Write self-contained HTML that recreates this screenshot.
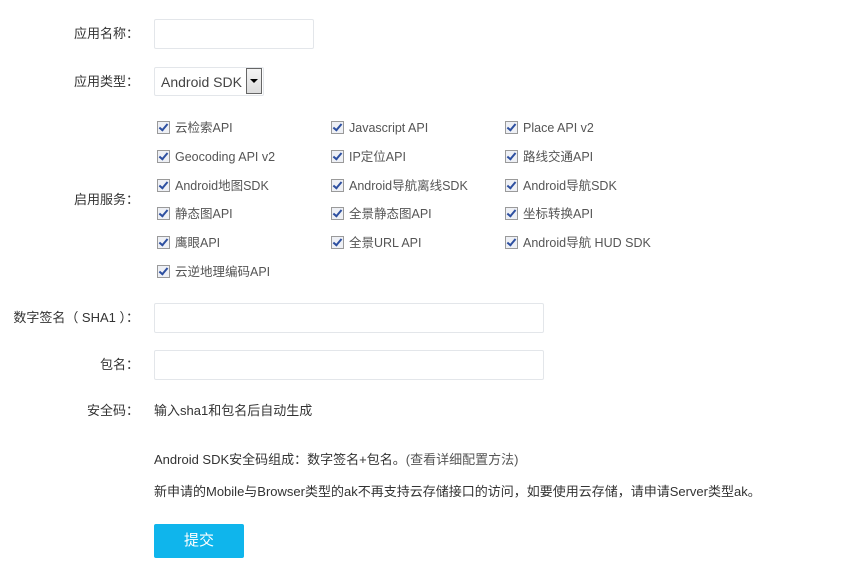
<!DOCTYPE html>
<html><head><meta charset="utf-8"><style>
body{margin:0;width:861px;height:587px;background:#fff;font-family:"Liberation Sans","Noto Sans CJK SC",sans-serif;font-size:13px;color:#333;position:relative;overflow:hidden}
.a{position:absolute;white-space:nowrap;line-height:16px}
.l{position:absolute;right:722px;text-align:right;white-space:nowrap;line-height:16px}
.in{position:absolute;border:1px solid #e3e6ea;border-radius:2px;background:#fff;box-sizing:border-box}
.cb{position:absolute;white-space:nowrap;line-height:16px;color:#555;font-size:12.5px}
.cb i{display:inline-block;width:11px;height:11px;border:1px solid #9a9a9a;background:#eef0f5;vertical-align:-2px;margin-right:5px;position:relative}
.cb i:after{content:"";position:absolute;left:3px;top:0px;width:3px;height:7px;border:solid #2d4fa0;border-width:0 2px 2px 0;transform:rotate(40deg)}
</style></head><body>
<div class="l" style="top:26px">应用名称：</div>
<div class="in" style="left:154px;top:19px;width:160px;height:30px"></div>
<div class="l" style="top:74px">应用类型：</div>
<div class="in" style="left:154px;top:67px;width:110px;height:29px"></div>
<div class="a" style="left:161px;top:74px;color:#444;font-size:14px">Android SDK</div>
<div style="position:absolute;left:246px;top:68px;width:16px;height:26px;border:1px solid #666;background:linear-gradient(#f4f4f4,#ddd);box-sizing:border-box"></div>
<div style="position:absolute;left:250px;top:79px;width:0;height:0;border-left:4px solid transparent;border-right:4px solid transparent;border-top:4px solid #000"></div>

<div class="cb" style="left:157px;top:120px"><i></i>云检索API</div>
<div class="cb" style="left:331px;top:120px"><i></i>Javascript API</div>
<div class="cb" style="left:505px;top:120px"><i></i>Place API v2</div>
<div class="cb" style="left:157px;top:149px"><i></i>Geocoding API v2</div>
<div class="cb" style="left:331px;top:149px"><i></i>IP定位API</div>
<div class="cb" style="left:505px;top:149px"><i></i>路线交通API</div>
<div class="l" style="top:192px">启用服务：</div>
<div class="cb" style="left:157px;top:178px"><i></i>Android地图SDK</div>
<div class="cb" style="left:331px;top:178px"><i></i>Android导航离线SDK</div>
<div class="cb" style="left:505px;top:178px"><i></i>Android导航SDK</div>
<div class="cb" style="left:157px;top:206px"><i></i>静态图API</div>
<div class="cb" style="left:331px;top:206px"><i></i>全景静态图API</div>
<div class="cb" style="left:505px;top:206px"><i></i>坐标转换API</div>
<div class="cb" style="left:157px;top:235px"><i></i>鹰眼API</div>
<div class="cb" style="left:331px;top:235px"><i></i>全景URL API</div>
<div class="cb" style="left:505px;top:235px"><i></i>Android导航 HUD SDK</div>
<div class="cb" style="left:157px;top:264px"><i></i>云逆地理编码API</div>

<div class="l" style="top:310px">数字签名（ SHA1 ）：</div>
<div class="in" style="left:154px;top:303px;width:390px;height:30px"></div>
<div class="l" style="top:357px">包名：</div>
<div class="in" style="left:154px;top:350px;width:390px;height:30px"></div>
<div class="l" style="top:403px">安全码：</div>
<div class="a" style="left:154px;top:403px">输入sha1和包名后自动生成</div>
<div class="a" style="left:154px;top:452px">Android SDK安全码组成：数字签名+包名。<span style="color:#555">(查看详细配置方法)</span></div>
<div class="a" style="left:154px;top:484px">新申请的Mobile与Browser类型的ak不再支持云存储接口的访问，如要使用云存储，请申请Server类型ak。</div>
<div style="position:absolute;left:154px;top:524px;width:90px;height:34px;background:#0fb5ec;border-radius:2px;color:#fff;font-size:15px;line-height:34px;text-align:center">提交</div>
</body></html>
